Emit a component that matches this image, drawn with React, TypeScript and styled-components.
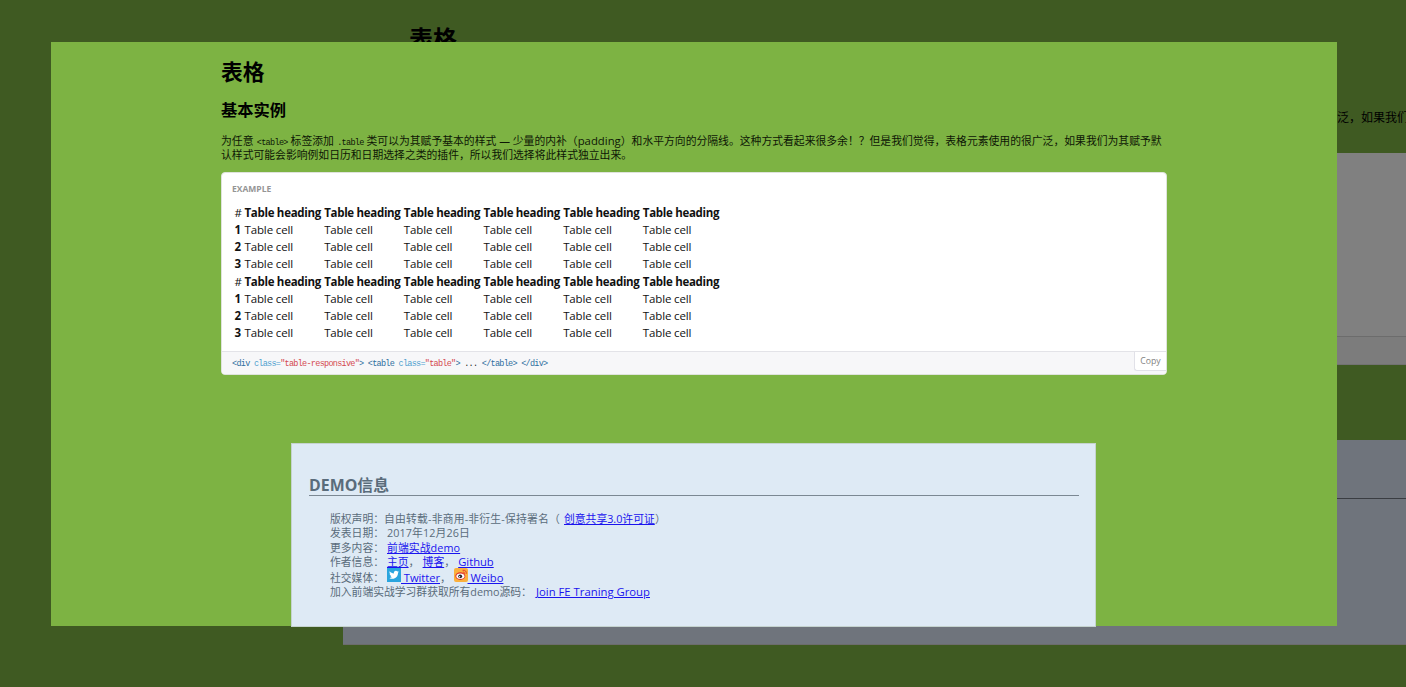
import React from "react";
import styled, { createGlobalStyle } from "styled-components";

const sans = `"Open Sans", "Noto Sans CJK SC", sans-serif`;

const GlobalStyle = createGlobalStyle`
  * { box-sizing: border-box; }
  html, body { margin: 0; padding: 0; overflow: hidden; }
  body { font-family: ${sans}; color: #000; }
`;

const Screen = styled.div`
  display: grid;
  width: 1406px;
  height: 687px;
  overflow: hidden;
  background: #3f5a22;
`;

const Backdrop = styled.div`
  grid-area: 1 / 1;
  display: flex;
  flex-direction: column;
  width: 1406px;
  min-width: 0;
`;

const BackTitle = styled.div`
  height: 32px;
  margin: 22px 0 0 409px;
  font-size: 24px;
  line-height: 34px;
  font-weight: 700;
`;

const BackText = styled.div`
  height: 16px;
  margin: 56px 0 0 1337px;
  font-size: 12px;
  line-height: 16px;
  white-space: nowrap;
`;

const BackCard = styled.div`
  display: flex;
  flex-direction: column;
  justify-content: flex-end;
  height: 212px;
  margin: 27px 0 0 409px;
  background: #808080;
`;

const BackCode = styled.div`
  height: 29px;
  background: #7c7c7c;
  border-top: 1px solid #6c6c6c;
  border-bottom: 1px solid #727272;
`;

const BackInfo = styled.div`
  height: 205px;
  margin: 75px 0 0 343px;
  background: #6f747c;
  border-bottom: 1px solid #6c6c6c;
`;

const BackRule = styled.div`
  height: 59px;
  margin-left: 22px;
  border-bottom: 1px solid #3a3d42;
`;

const Modal = styled.main`
  grid-area: 1 / 1;
  z-index: 1;
  display: flex;
  flex-direction: column;
  width: 1286px;
  height: 584px;
  margin: 42px 0 0 51px;
  padding: 14px 170px 0;
  background: #7db343;

  > * {
    flex: none;
  }
`;

const Title = styled.h1`
  margin: 0;
  height: 32px;
  font-size: 21.8px;
  line-height: 31px;
`;

const Subtitle = styled.h2`
  margin: 10px 0 0;
  height: 24px;
  font-size: 16.3px;
  line-height: 24px;
`;

const Paragraph = styled.p`
  margin: 12px -10px 0 0;
  height: 29px;
  font-size: 10.8px;
  line-height: 14.4px;
  letter-spacing: 0.02px;
  color: #0d1605;
`;

const Line = styled.span`
  display: block;
  white-space: nowrap;
`;

const Latin = styled.span`
  font-size: 11.3px;
  line-height: 1;
`;

const InlineCode = styled.code`
  margin-left: 0.5px;
  font-family: "Liberation Mono", monospace;
  font-size: 8.5px;
  letter-spacing: -0.68px;
  line-height: 1;
`;

const Card = styled.section`
  display: flex;
  flex-direction: column;
  width: 946px;
  height: 203px;
  margin-top: 9px;
  background: #fff;
  border: 1px solid #dfe3dc;
  border-radius: 4px;
  overflow: hidden;
`;

const Label = styled.div`
  height: 31px;
  padding: 7px 0 0 10px;
  font-size: 8.5px;
  line-height: 18px;
  font-weight: 700;
  color: #959595;
`;

const Table = styled.table`
  width: 488px;
  height: 137px;
  margin-left: 12.5px;
  border-collapse: collapse;
  table-layout: fixed;
  font-size: 11.5px;
  line-height: 17px;
  color: #111;
`;

const Row = styled.tr`
  height: 17px;
`;

const HeadRow = styled.tr<{ $tall?: boolean }>`
  height: ${(p) => (p.$tall ? 18 : 17)}px;
  vertical-align: bottom;
`;

const Cell = styled.td`
  padding: 0;
  letter-spacing: -0.13px;
  white-space: nowrap;
`;

const Heading = styled.th`
  padding: 0;
  text-align: left;
  font-weight: 700;
  letter-spacing: -0.3px;
  white-space: nowrap;
`;

const Index = styled.td<{ $bold?: boolean }>`
  width: 10px;
  padding: 0;
  font-weight: ${(p) => (p.$bold ? 700 : 400)};
  white-space: nowrap;
`;

const CodeBar = styled.div`
  display: flex;
  justify-content: space-between;
  align-items: flex-start;
  height: 23px;
  margin-top: auto;
  background: #f7f7f9;
  border-top: 1px solid #e3e3e8;
`;

const Code = styled.code`
  padding-left: 10px;
  font-family: "Liberation Mono", monospace;
  font-size: 8.5px;
  line-height: 24px;
  letter-spacing: -0.72px;
  white-space: pre;
  color: #222;
`;

const Tag = styled.span`
  color: #2f6f9f;
`;
const Attr = styled.span`
  color: #4f9fcf;
`;
const Str = styled.span`
  color: #d44950;
`;

const CopyButton = styled.button`
  width: 32px;
  height: 19px;
  padding: 0;
  border: 1px solid #e1e1e8;
  border-top: 0;
  border-right: 0;
  border-radius: 0 0 0 3px;
  background: #fff;
  color: #818181;
  font: 8.7px/18px ${sans};
`;

const Info = styled.footer`
  width: 805px;
  height: 184px;
  margin: 68px 0 0 70px;
  padding: 30px 16px 0 17px;
  background: #deeaf5;
  border: 1px solid #c5d3cf;
  color: #5a6c7b;
`;

const InfoTitle = styled.h2`
  margin: 0;
  height: 22px;
  border-bottom: 1px solid #7b8893;
  font-size: 15.9px;
  line-height: 22px;
  white-space: nowrap;
`;

const InfoList = styled.div`
  display: flex;
  flex-direction: column;
  padding: 16px 0 0 21px;
  font-size: 10.8px;
`;

const Item = styled.div<{ $height?: number }>`
  display: flex;
  align-items: flex-end;
  height: ${(p) => p.$height ?? 14.3}px;
  line-height: 14.3px;
  white-space: nowrap;
`;

const ItemLabel = styled.span<{ $width: number; $gap?: number }>`
  width: ${(p) => p.$width}px;
  letter-spacing: ${(p) => p.$gap ?? 0}px;
`;

const Link = styled.a<{ $width?: number; $gap?: number; $size?: number }>`
  display: block;
  width: ${(p) => (p.$width ? `${p.$width}px` : "auto")};
  font-size: ${(p) => p.$size ?? 10.8}px;
  letter-spacing: ${(p) => p.$gap ?? 0}px;
  color: #1a14ee;
  text-decoration: underline;
  white-space: pre;
`;

const Icon = styled.svg`
  flex: none;
  width: 14px;
  height: 14px;
  margin-bottom: 3px;
`;

const TwitterIcon = () => (
  <Icon viewBox="0 0 14 14">
    <rect width="14" height="14" fill="#2aa5de" />
    <path
      fill="#fff"
      d="M2.6 3.2c1.2 1.4 2.6 2.1 4.3 2.2-.3-1.5.7-2.6 2-2.6.6 0 1.1.2 1.5.6l1.3-.5-.8 1.1 1-.2-.9 1c.1 3.4-2.3 6-5.5 6-1.2 0-2.3-.3-3.2-.9 1.1.1 2.1-.2 2.9-.8-.9-.1-1.6-.6-1.9-1.4h.8C3.2 7.4 2.6 6.6 2.6 5.6l.9.2C2.6 5.2 2.2 4.2 2.6 3.2z"
    />
  </Icon>
);

const WeiboIcon = () => (
  <Icon viewBox="0 0 14 14">
    <rect width="14" height="14" rx="2" fill="#fbb03d" />
    <ellipse cx="6.3" cy="8.1" rx="5" ry="3.8" fill="#e0322c" />
    <ellipse cx="6.4" cy="8.3" rx="4" ry="2.7" fill="#fff" />
    <circle cx="6.2" cy="8.3" r="1.9" fill="#222" />
    <circle cx="5.6" cy="8.8" r=".7" fill="#fff" />
    <path
      d="M8.6 2.3c2.6-.5 4.2 1.2 3.6 3.6M8.8 4.1c1.2-.2 1.9.5 1.7 1.6"
      fill="none"
      stroke="#e0322c"
      strokeWidth=".9"
    />
  </Icon>
);

const columns = [1, 2, 3, 4, 5, 6];

const Group = ({ tall }: { tall?: boolean }) => (
  <tbody>
    <HeadRow $tall={tall}>
      <Index>#</Index>
      {columns.map((c) => (
        <Heading key={c}>Table heading</Heading>
      ))}
    </HeadRow>
    {[1, 2, 3].map((r) => (
      <Row key={r}>
        <Index $bold>{r}</Index>
        {columns.map((c) => (
          <Cell key={c}>Table cell</Cell>
        ))}
      </Row>
    ))}
  </tbody>
);

export default function App() {
  return (
    <>
      <GlobalStyle />
      <Screen>
        <Backdrop>
          <BackTitle>表格</BackTitle>
          <BackText>泛，如果我们</BackText>
          <BackCard>
            <BackCode />
          </BackCard>
          <BackInfo>
            <BackRule />
          </BackInfo>
        </Backdrop>
        <Modal>
          <Title>表格</Title>
          <Subtitle>基本实例</Subtitle>
          <Paragraph>
            <Line>
              为任意 <InlineCode>&lt;table&gt;</InlineCode> 标签添加 <InlineCode>.table</InlineCode>{" "}
              类可以为其赋予基本的样式 — 少量的内补（<Latin>padding</Latin>
              ）和水平方向的分隔线。这种方式看起来很多余！？但是我们觉得，表格元素使用的很广泛，如果我们为其赋予默
            </Line>
            <Line>认样式可能会影响例如日历和日期选择之类的插件，所以我们选择将此样式独立出来。</Line>
          </Paragraph>
          <Card>
            <Label>EXAMPLE</Label>
            <Table>
              <Group />
              <Group tall />
            </Table>
            <CodeBar>
              <Code>
                <Tag>&lt;div </Tag>
                <Attr>class=</Attr>
                <Str>"table-responsive"</Str>
                <Tag>&gt; &lt;table </Tag>
                <Attr>class=</Attr>
                <Str>"table"</Str>
                <Tag>&gt;</Tag>
                {" ... "}
                <Tag>&lt;/table&gt; &lt;/div&gt;</Tag>
              </Code>
              <CopyButton>Copy</CopyButton>
            </CodeBar>
          </Card>
          <Info>
            <InfoTitle>DEMO信息</InfoTitle>
            <InfoList>
              <Item>
                <ItemLabel $width={54}>版权声明：</ItemLabel>
                <ItemLabel $width={180} $gap={0.2}>自由转载-非商用-非衍生-保持署名（</ItemLabel>
                <Link $width={91}>创意共享3.0许可证</Link>）
              </Item>
              <Item>
                <ItemLabel $width={57}>发表日期：</ItemLabel>
                <ItemLabel $width={90} $gap={0.1}>2017年12月26日</ItemLabel>
              </Item>
              <Item>
                <ItemLabel $width={57}>更多内容：</ItemLabel>
                <Link $gap={0.1}>前端实战demo</Link>
              </Item>
              <Item>
                <ItemLabel $width={57}>作者信息：</ItemLabel>
                <Link>主页</Link>
                <ItemLabel $width={14}>，</ItemLabel>
                <Link>博客</Link>
                <ItemLabel $width={14}>，</ItemLabel>
                <Link $size={11.2}>Github</Link>
              </Item>
              <Item $height={16.3}>
                <ItemLabel $width={57}>社交媒体：</ItemLabel>
                <TwitterIcon />
                <Link $size={11.2} $gap={-0.05}> Twitter</Link>
                <ItemLabel $width={13.5}>，</ItemLabel>
                <WeiboIcon />
                <Link $size={11.2}> Weibo</Link>
              </Item>
              <Item>
                <ItemLabel $width={206}>加入前端实战学习群获取所有demo源码：</ItemLabel>
                <Link $size={11.3}>Join FE Traning Group</Link>
              </Item>
            </InfoList>
          </Info>
        </Modal>
      </Screen>
    </>
  );
}
